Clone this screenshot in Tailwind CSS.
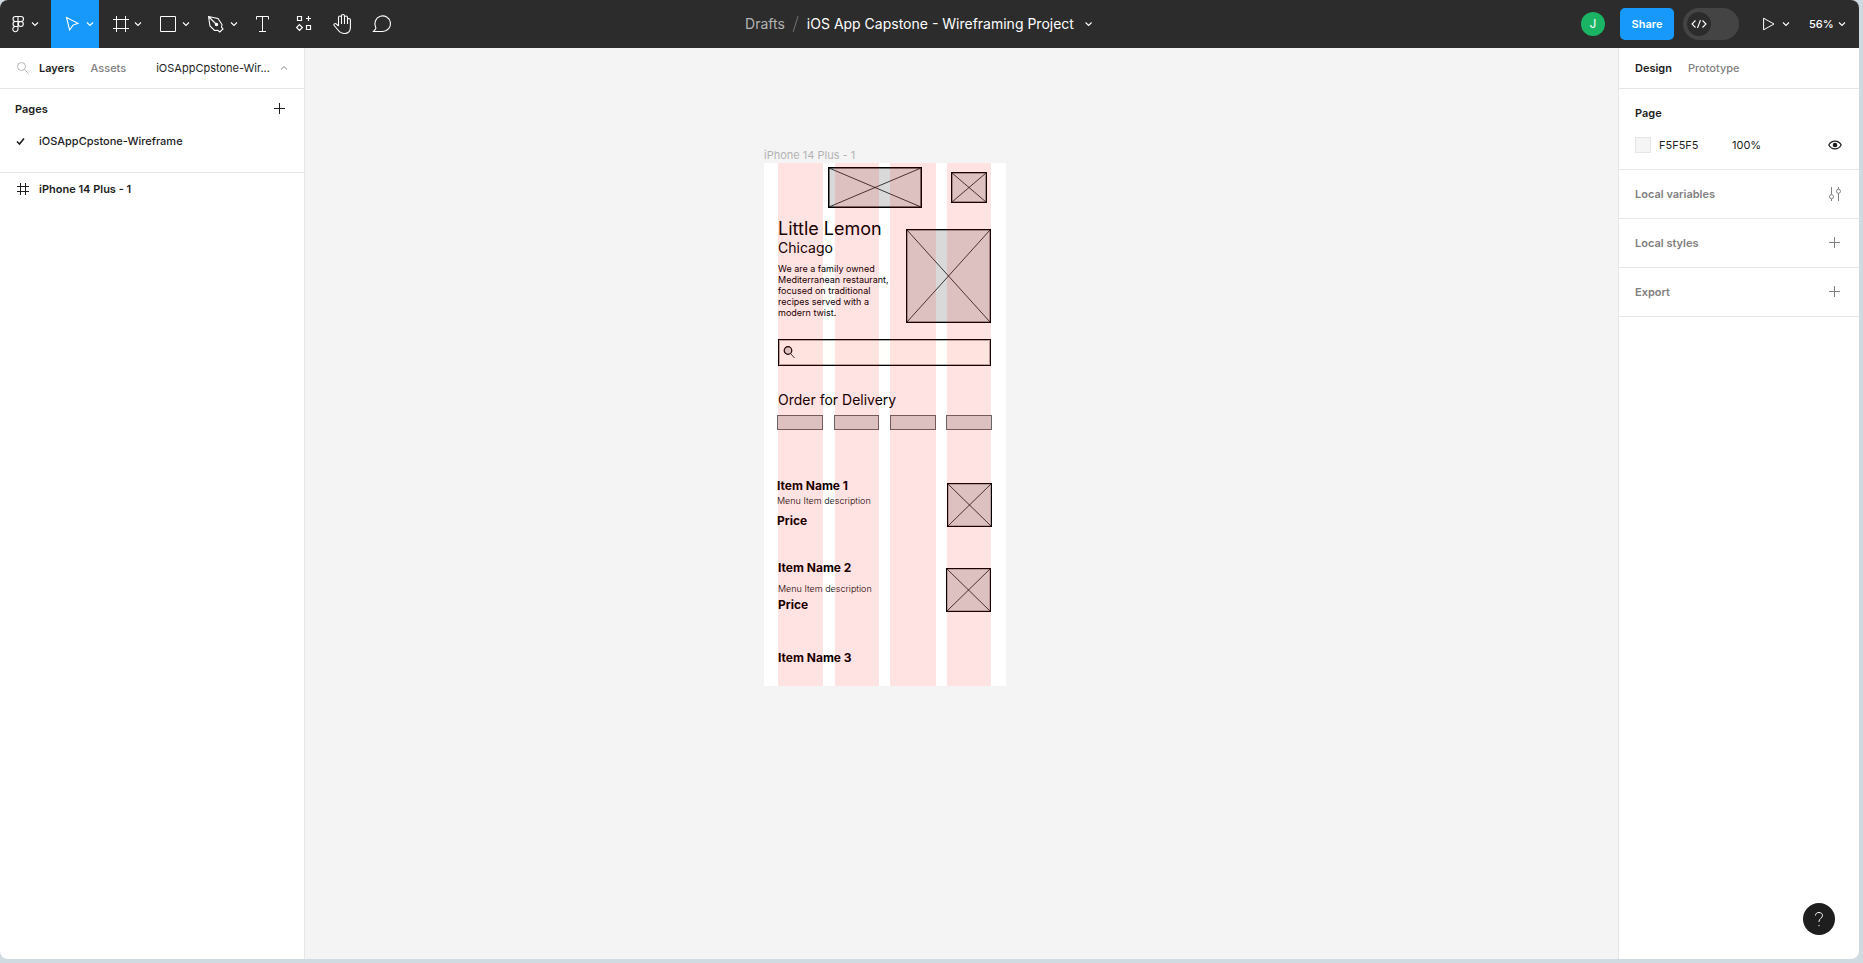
<!DOCTYPE html>
<html lang="en">
<head>
<meta charset="utf-8">
<meta name="viewport" content="width=device-width, initial-scale=1">
<title>iOS App Capstone - Wireframing Project</title>
<script src="https://cdn.jsdelivr.net/npm/@tailwindcss/browser@4"></script>
</head>
<body class="h-screen overflow-hidden bg-[#cfdbe1] pr-1 pb-1 font-[Inter,sans-serif] text-[11px] leading-4 text-[#1e1e1e]">
<svg class="hidden" aria-hidden="true">
  <symbol id="chev" viewBox="0 0 10 10"><path d="M2 3.5l3 3 3-3" fill="none" stroke="currentColor" stroke-width="1.1"/></symbol>
  <symbol id="plus" viewBox="0 0 12 12"><path d="M5.5 0v11M0 5.5h11" fill="none" stroke="currentColor"/></symbol>
  <symbol id="cross" viewBox="0 0 100 100" preserveAspectRatio="none"><path d="M0 0L100 100M100 0L0 100" fill="none" stroke="currentColor" stroke-opacity=".75" vector-effect="non-scaling-stroke"/></symbol>
</svg>
<div class="flex h-full flex-col overflow-hidden rounded-lg bg-white">
  <header class="relative flex h-12 shrink-0 items-center justify-between bg-[#2c2c2c] text-white">
    <nav class="flex h-full" aria-label="Tools">
      <button aria-label="Main menu" class="flex h-full w-[51px] items-center pl-1.5">
        <svg class="size-6" viewBox="0 0 24 24" fill="none" stroke="currentColor" stroke-width="1.1"><path d="M12 4.5H9.500a2.500 2.500 0 0 0 0 5H12zM12 4.500h3a2.500 2.500 0 0 1 0 5h-3zM12 9.500H9.500a2.500 2.500 0 0 0 0 5H12zM12 14.500H9.500a2.600 2.600 0 1 0 2.500 2.600z"/><circle cx="14.800" cy="12" r="2.500"/></svg>
        <svg class="size-2.5"><use href="#chev"/></svg>
      </button>
      <button aria-label="Move" class="flex h-full w-12 items-center bg-[#1699fa] pl-[10px]">
        <svg class="size-6" viewBox="0 0 24 24" fill="none" stroke="currentColor" stroke-width="1.1"><path d="M5.500 5.500L17 11.300l-5 1.800-3.400 4.900z"/></svg>
        <svg class="size-2.5"><use href="#chev"/></svg>
      </button>
      <button aria-label="Frame" class="flex h-full w-12 items-center pl-[10px]">
        <svg class="size-6" viewBox="0 0 24 24" fill="none" stroke="currentColor"><path d="M7.500 4v16M16.500 4v16M4 7.500h16M4 16.500h16"/></svg>
        <svg class="size-2.5"><use href="#chev"/></svg>
      </button>
      <button aria-label="Rectangle" class="flex h-full w-12 items-center pl-[10px]">
        <svg class="size-6" viewBox="0 0 24 24" fill="none" stroke="currentColor"><path d="M3.500 4.500h15v15h-15z"/></svg>
        <svg class="size-2.5"><use href="#chev"/></svg>
      </button>
      <button aria-label="Pen" class="flex h-full w-12 items-center pl-[10px]">
        <svg class="size-6" viewBox="0 0 24 24" fill="none" stroke="currentColor" stroke-width="1.1"><path d="M3.500 4.500l9.500 2 4 6-.5 2.500 1.500 2-3.200 3-2-1.600-3.300.1-4.500-4.500zM3.500 4.500l7.500 7.500"/><circle cx="11.500" cy="12.500" r="1.200" fill="currentColor"/></svg>
        <svg class="size-2.5"><use href="#chev"/></svg>
      </button>
      <button aria-label="Text" class="flex h-full w-10 items-center justify-center">
        <svg class="size-6" viewBox="0 0 24 24" fill="none" stroke="currentColor"><path d="M5.500 7.500v-3h12v3M11.500 4.500v15M8 19.500h7"/></svg>
      </button>
      <button aria-label="Resources" class="flex h-full w-10 items-center justify-center">
        <svg class="size-6" viewBox="0 0 24 24" fill="none" stroke="currentColor" stroke-width="1.200"><path d="M6.500 4.500h4v4h-4zM15.500 13.500h4v4h-4zM17.500 4v5M15 6.500h5M8.500 12.600l2.900 2.900-2.900 2.900-2.900-2.900z"/></svg>
      </button>
      <button aria-label="Hand" class="flex h-full w-10 items-center justify-center">
        <svg class="size-6" viewBox="0 0 24 24" fill="none" stroke="currentColor" stroke-width="1.100" stroke-linejoin="round"><path d="M7.500 14V5.500a1.500 1.500 0 0 1 3 0V12M10.500 5V4a1.500 1.500 0 0 1 3 0v8M13.500 5.500a1.500 1.500 0 0 1 3 0V12M16.500 8a1.400 1.400 0 0 1 2.900 0v7.500c0 4-2.400 6-5.900 6-3.500 0-5-1.500-6.500-3.500l-3.800-4.500c-1-1.400.8-2.500 2-1.600l2.300 2.100"/></svg>
      </button>
      <button aria-label="Comment" class="flex h-full w-10 items-center justify-center">
        <svg class="size-6" viewBox="0 0 24 24" fill="none" stroke="currentColor" stroke-width="1.100"><path d="M2.500 19.500h9.300a7.800 7.800 0 1 0-7.100-4.300c.4.900.2 1.300-.2 2z"/></svg>
      </button>
    </nav>
    <div class="absolute left-1/2 flex -translate-x-1/2 items-center gap-2 pr-5 text-[14px] leading-5 whitespace-nowrap">
      <a href="#" class="text-[#b3b3b3]">Drafts</a>
      <svg class="h-4 w-[6px] text-[#757575]" viewBox="0 0 6 16"><path d="M5.500 0L.5 16" stroke="currentColor"/></svg>
      <button class="flex items-center gap-[10px]">iOS App Capstone - Wireframing Project<svg class="size-2.5"><use href="#chev"/></svg></button>
    </div>
    <div class="flex items-center pr-3 font-medium">
      <span class="flex size-6 items-center justify-center rounded-full bg-[#1bb465] text-[12px] font-normal">J</span>
      <button class="ml-[15px] h-8 w-[54px] rounded-[5px] bg-[#1699fa] font-semibold">Share</button>
      <button aria-label="Dev Mode" role="switch" aria-checked="false" class="ml-[9px] flex h-8 w-14 items-center rounded-full bg-[#444] pl-1">
        <span class="flex size-6 items-center justify-center rounded-full bg-[#2c2c2c]"><svg class="size-4" viewBox="0 0 16 16" fill="none" stroke="currentColor" stroke-width="1.100"><path d="M4.500 4.500L1 8l3.500 3.500M11.500 4.500L15 8l-3.500 3.500M9.500 4l-3 8"/></svg></span>
      </button>
      <button aria-label="Present" class="ml-6 flex items-center gap-[6px]"><svg class="h-4 w-3" viewBox="0 0 12 16" fill="none" stroke="currentColor"><path d="M.6 2.200v11.600L11 8z"/></svg><svg class="size-2.5"><use href="#chev"/></svg></button>
      <button class="ml-[18px] flex w-[38px] items-center justify-between">56%<svg class="size-2.5"><use href="#chev"/></svg></button>
    </div>
  </header>
  <div class="flex min-h-0 flex-1">
    <aside class="w-[305px] shrink-0 border-r border-[#e6e6e6]">
      <div class="flex h-[41px] items-center border-b border-[#e6e6e6] pl-4 whitespace-nowrap">
        <svg class="size-3.5 shrink-0 text-[#b3b3b3]" viewBox="0 0 14 14" fill="none" stroke="currentColor"><circle cx="5.500" cy="5.500" r="4"/><path d="M8.500 8.500l4 4"/></svg>
        <button class="ml-[9px] font-semibold">Layers</button>
        <button class="ml-4 font-medium text-[#808080]">Assets</button>
        <button class="ml-[30px] flex items-center gap-[9px]">iOSAppCpstone-Wir...<svg class="size-2.5 rotate-180 text-[#b3b3b3]"><use href="#chev"/></svg></button>
      </div>
      <section class="h-[84px] border-b border-[#e6e6e6]">
        <div class="flex h-10 items-center justify-between pr-[18px] pl-[15px]">
          <h2 class="font-semibold">Pages</h2>
          <button aria-label="Add page"><svg class="size-3"><use href="#plus"/></svg></button>
        </div>
        <a href="#" class="flex h-6 items-center gap-[14px] pl-4 font-medium"><svg class="size-[9px]" viewBox="0 0 9 9" fill="none" stroke="currentColor" stroke-width="1.600"><path d="M1 4.500l2.500 2.500 4.500-5.500"/></svg>iOSAppCpstone-Wireframe</a>
      </section>
      <a href="#" class="flex h-8 items-center gap-[10px] pl-[17px] font-semibold"><svg class="size-3" viewBox="0 0 12 12" fill="none" stroke="currentColor"><path d="M3.500 0v12M8.500 0v12M0 3.500h12M0 8.500h12"/></svg>iPhone 14 Plus - 1</a>
    </aside>

    <!-- Free canvas: objects are placed by their own coordinates -->
    <main class="relative flex-1 bg-[#f4f4f4]">
      <span class="absolute top-[99px] left-[459px] whitespace-nowrap text-[#b3b3b3]">iPhone 14 Plus - 1</span>
      <div class="absolute top-[115px] left-[459px] h-[523px] w-[242px] overflow-hidden bg-white whitespace-nowrap text-black">
        <div class="absolute top-1 left-16 h-[41px] w-[94px] border border-black bg-[#d9d9d9] inset-ring inset-ring-black/50"><svg class="size-full"><use href="#cross"/></svg></div>
        <div class="absolute top-[9px] left-[187px] h-[31px] w-[36px] border border-black bg-[#d9d9d9] inset-ring inset-ring-black/30"><svg class="size-full"><use href="#cross"/></svg></div>
        <h1 class="absolute top-[54px] left-[14px] text-[18px] leading-6">Little Lemon</h1>
        <h2 class="absolute top-[75px] left-[14px] text-[14px] leading-5">Chicago</h2>
        <p class="absolute top-[100px] left-[14px] text-[9px] leading-[11px]">We are a family owned<br>Mediterranean restaurant,<br>focused on traditional<br>recipes served with a<br>modern twist.</p>
        <div class="absolute top-[66px] left-[142px] h-[94px] w-[85px] border border-black bg-[#d9d9d9] inset-ring inset-ring-black/30"><svg class="size-full"><use href="#cross"/></svg></div>
        <div class="absolute top-[176px] left-[14px] h-[27px] w-[213px] border border-black bg-[#fffffb] inset-ring inset-ring-black/30 pt-[6px] pl-1">
          <svg class="h-[13px] w-[13px]" viewBox="0 0 13 13" fill="none" stroke="currentColor"><circle cx="5" cy="4.500" r="3.800" fill="#d9d9d9" stroke-width="1.200"/><path d="M8 8l3.500 4" stroke-width=".8"/></svg>
        </div>
        <h2 class="absolute top-[227px] left-[14px] text-[14px] leading-5">Order for Delivery</h2>
        <div class="absolute top-[252px] left-[13px] h-[15px] w-[46px] border border-[#666] bg-[#d9d9d9]"></div>
        <div class="absolute top-[252px] left-[70px] h-[15px] w-[45px] border border-[#666] bg-[#d9d9d9]"></div>
        <div class="absolute top-[252px] left-[126px] h-[15px] w-[46px] border border-[#666] bg-[#d9d9d9]"></div>
        <div class="absolute top-[252px] left-[182px] h-[15px] w-[46px] border border-[#666] bg-[#d9d9d9]"></div>
        <h3 class="absolute top-[315px] left-[13px] text-[12px] font-bold">Item Name 1</h3>
        <p class="absolute top-[331px] left-[13px] text-[9px] leading-[14px] font-light">Menu Item description</p>
        <p class="absolute top-[350px] left-[13px] text-[12px] font-bold">Price</p>
        <div class="absolute top-[320px] left-[183px] h-11 w-[45px] border border-black bg-[#d9d9d9] inset-ring inset-ring-black/20"><svg class="size-full"><use href="#cross"/></svg></div>
        <h3 class="absolute top-[397px] left-[14px] text-[12px] font-bold">Item Name 2</h3>
        <p class="absolute top-[419px] left-[14px] text-[9px] leading-[14px] font-light">Menu Item description</p>
        <p class="absolute top-[434px] left-[14px] text-[12px] font-bold">Price</p>
        <div class="absolute top-[405px] left-[182px] h-11 w-[45px] border border-black bg-[#d9d9d9] inset-ring inset-ring-black/20"><svg class="size-full"><use href="#cross"/></svg></div>
        <h3 class="absolute top-[487px] left-[14px] text-[12px] font-bold">Item Name 3</h3>
        <!-- Column layout grid -->
        <div class="absolute inset-0 grid grid-cols-[45px_45px_46px_44px] gap-x-[11px] pl-[14px]">
          <div class="bg-[#ff00001c]"></div><div class="ml-px bg-[#ff00001c]"></div><div class="bg-[#ff00001c]"></div><div class="bg-[#ff00001c]"></div>
        </div>
      </div>
    </main>

    <aside class="relative w-[241px] shrink-0 border-l border-[#e6e6e6]">
      <div class="flex h-[41px] items-center gap-4 border-b border-[#e6e6e6] pl-4">
        <button class="font-semibold">Design</button>
        <button class="font-medium text-[#808080]">Prototype</button>
      </div>
      <section class="h-[81px] border-b border-[#e6e6e6] pt-4 pr-[17px] pl-4">
        <h2 class="font-semibold">Page</h2>
        <div class="mt-4 flex items-center">
          <span class="size-4 border border-[#e6e6e6] bg-[#f5f5f5]"></span>
          <span class="ml-2 w-[73px]">F5F5F5</span><span>100%</span>
          <button aria-label="Toggle visibility" class="ml-auto"><svg class="h-3 w-[14px]" viewBox="0 0 14 12" fill="none" stroke="currentColor" stroke-width="1.200"><path d="M.8 6C3.500.9 10.500.9 13.200 6 10.500 11.100 3.500 11.100.8 6z"/><circle cx="7" cy="6" r="1.700" fill="currentColor"/></svg></button>
        </div>
      </section>
      <section class="flex h-[49px] items-center justify-between border-b border-[#e6e6e6] pr-[18px] pl-4 text-[#808080]">
        <h2 class="font-semibold">Local variables</h2>
        <button aria-label="Open variables"><svg class="h-3.5 w-3" viewBox="0 0 12 14" fill="none" stroke="currentColor"><path d="M2.500 0v7.500M2.500 12v2M9.500 0v2M9.500 6.500V14"/><circle cx="2.500" cy="9.700" r="2"/><circle cx="9.500" cy="4.300" r="2"/></svg></button>
      </section>
      <section class="flex h-[49px] items-center justify-between border-b border-[#e6e6e6] pr-[18px] pl-4 text-[#808080]">
        <h2 class="font-semibold">Local styles</h2>
        <button aria-label="Add style"><svg class="size-3"><use href="#plus"/></svg></button>
      </section>
      <section class="flex h-[49px] items-center justify-between border-b border-[#e6e6e6] pr-[18px] pl-4 text-[#808080]">
        <h2 class="font-semibold">Export</h2>
        <button aria-label="Add export"><svg class="size-3"><use href="#plus"/></svg></button>
      </section>
      <button aria-label="Help" class="absolute right-6 bottom-6 flex size-8 items-center justify-center rounded-full bg-[#1e1e1e] text-white"><svg class="h-4 w-2.5" viewBox="0 0 10 16" fill="none" stroke="currentColor"><path d="M1.500 4.500C1.500 2.500 3 1.500 5 1.500s3.500 1.200 3.500 3c0 2.800-3.500 2.800-3.500 6V11M5 14v1.200"/></svg></button>
    </aside>
  </div>
</div>
</body>
</html>
